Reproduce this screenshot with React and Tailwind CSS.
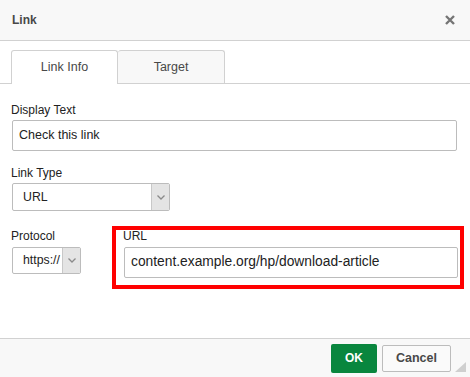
import React from "react";

function Chevron() {
  return (
    <svg width="8" height="5" viewBox="0 0 8 5" fill="none">
      <path d="M0.5 0.5 L4 4 L7.5 0.5" stroke="#8a8a8a" strokeWidth="1.3" />
    </svg>
  );
}

function Select({ value, width, height }) {
  return (
    <div
      className="flex border border-[#bcbcbc] rounded-[2px] bg-white overflow-hidden"
      style={{ width, height }}
    >
      <div className="flex-1 flex items-center pl-[10px] text-[12.3px] text-[#222]">{value}</div>
      <div className="w-[18px] flex items-center justify-center bg-[#e4e4e4] border-l border-[#c8c8c8]">
        <Chevron />
      </div>
    </div>
  );
}

export default function App() {
  return (
    <div
      className="w-[470px] h-[377px] flex flex-col bg-white overflow-hidden"
      style={{ fontFamily: '"Liberation Sans", Arial, sans-serif' }}
    >
      {/* Header */}
      <div className="h-[41px] shrink-0 bg-[#f8f8f8] border-b border-[#d1d1d1] flex items-center justify-between pl-[12px] pr-[15px]">
        <span className="text-[12px] font-bold text-[#484848]">Link</span>
        <svg width="10" height="10" viewBox="0 0 10 10">
          <path d="M1 1 L9 9 M9 1 L1 9" stroke="#757575" strokeWidth="2.4" />
        </svg>
      </div>

      {/* Tabs */}
      <div className="shrink-0 flex items-end pl-[11px] pt-[9px] border-b border-[#d1d1d1]">
        <div className="w-[107px] h-[34px] -mb-px bg-white border border-b-0 border-[#d1d1d1] rounded-t-[3px] flex items-center justify-center text-[12.5px] text-[#484848] pb-[1px]">
          Link Info
        </div>
        <div className="w-[107px] h-[33px] bg-[#f8f8f8] border border-b-0 border-l-0 border-[#d1d1d1] rounded-t-[3px] flex items-center justify-center text-[12.5px] text-[#484848]">
          Target
        </div>
      </div>

      {/* Body */}
      <div className="flex-1 px-[12px] pt-[19px] text-[#222]">
        <div className="text-[12px] leading-[14px] -ml-px">Display Text</div>
        <div className="mt-[3px] w-[445px] h-[31px] border border-[#bcbcbc] rounded-[2px] flex items-center px-[6px] text-[12.5px]">
          Check this link
        </div>

        <div className="mt-[15px] text-[12px] leading-[14px] -ml-px">Link Type</div>
        <div className="mt-[3px]">
          <Select value="URL" width={158} height={28} />
        </div>

        <div className="mt-[15px] flex items-start">
          <div className="w-[69px] shrink-0 pt-[3px]">
            <div className="text-[12px] leading-[14px] -ml-px">Protocol</div>
            <div className="mt-[4px]">
              <Select value="https://" width={69} height={27} />
            </div>
          </div>
          <div className="ml-[31px] w-[352px] shrink-0 border-4 border-[#ff0000] pl-[8px] pr-[2px] pb-[7px]">
            <div className="text-[12px] leading-[12px] -ml-px">URL</div>
            <div className="mt-[5px] w-[334px] h-[31px] border border-[#bcbcbc] rounded-[2px] flex items-center px-[6px] text-[13.8px]">
              content.example.org/hp/download-article
            </div>
          </div>
        </div>
      </div>

      {/* Footer */}
      <div className="relative h-[39px] shrink-0 bg-[#f8f8f8] border-t border-[#d1d1d1] flex items-center justify-end pr-[19px] gap-[5px]">
        <button className="w-[46px] h-[29px] bg-[#09863e] rounded-[2px] text-white text-[12px] font-bold">
          OK
        </button>
        <button className="w-[69px] h-[27px] bg-[#fafafa] border border-[#bcbcbc] rounded-[2px] text-[#484848] text-[12.5px] font-bold">
          Cancel
        </button>
        <svg className="absolute right-[4px] bottom-[5px]" width="11" height="10" viewBox="0 0 11 10">
          <path d="M11 0 L11 10 L0 10 Z" fill="#cfcfcf" />
        </svg>
      </div>
    </div>
  );
}
